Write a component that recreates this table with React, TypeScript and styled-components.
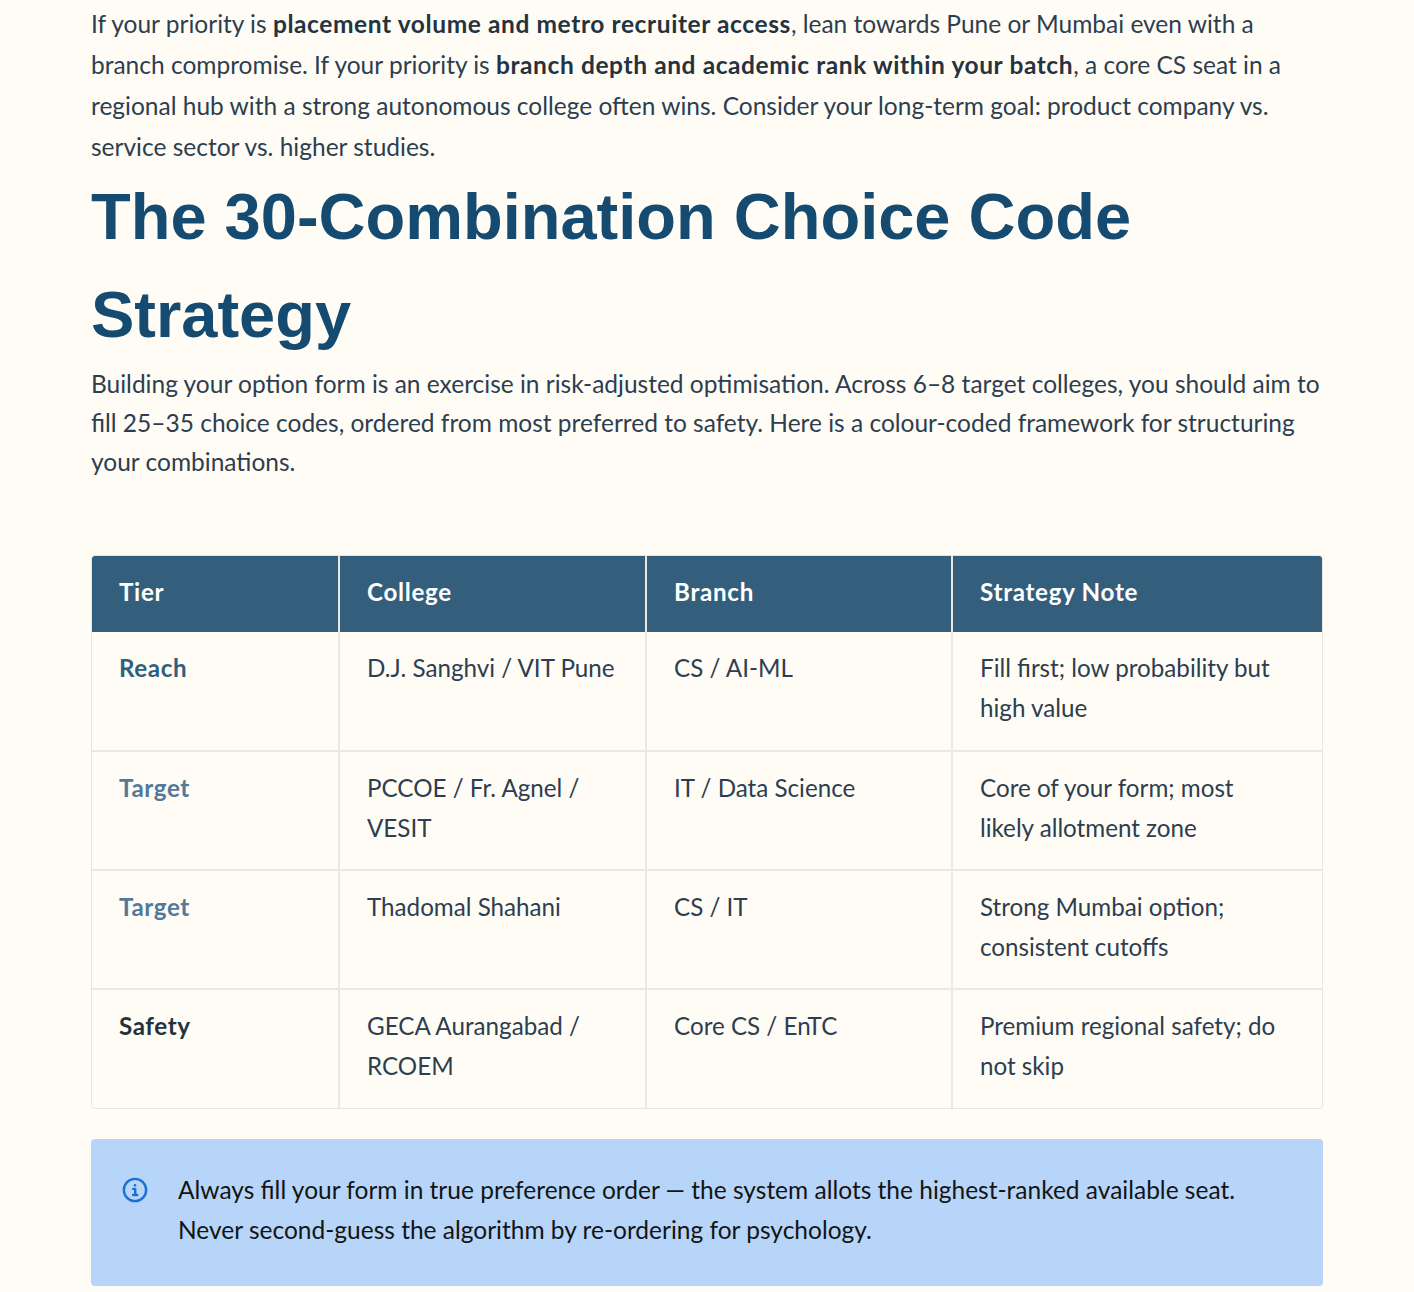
import React from 'react';
import styled, { createGlobalStyle } from 'styled-components';

const GlobalStyle = createGlobalStyle`
  html, body {
    margin: 0;
    padding: 0;
    background: #fffcf5;
  }
  body {
    font-family: Lato, 'Noto Sans', sans-serif;
    color: #2c3e50;
  }
`;

const Article = styled.article`
  width: 1232px;
  margin: 0 auto;
  padding-top: 3px;
  padding-bottom: 7px;
`;

const Lead = styled.p<{ $tall?: boolean }>`
  margin: 0;
  width: 1241px;
  font-size: 24.5px;
  line-height: ${(p) => (p.$tall ? '41px' : '39px')};
  color: #2c3e50;

  strong {
    font-weight: 700;
    letter-spacing: 0.6px;
    color: #24333f;
  }
`;

const Heading = styled.h2`
  margin: 1px 0 0;
  font-family: 'Liberation Sans', Arial, sans-serif;
  font-weight: 700;
  font-size: 65px;
  line-height: 98px;
  color: #154b70;
`;

const TableWrap = styled.div`
  margin-top: 74px;
  border: 1px solid #ebe6dd;
  border-radius: 4px;
  overflow: hidden;
`;

const Table = styled.table`
  width: 100%;
  border-collapse: collapse;
  table-layout: fixed;
  font-size: 24.2px;
`;

const HeadCell = styled.th<{ $w: number }>`
  width: ${(p) => p.$w}px;
  height: 76px;
  padding: 0 27px 6px;
  box-sizing: border-box;
  text-align: left;
  font-weight: 700;
  letter-spacing: 0.7px;
  color: #ffffff;
  background: #335f7c;
  border-left: 2px solid #e9e6df;

  &:first-child {
    border-left: none;
  }
`;

const Row = styled.tr`
  & + & td {
    border-top: 2px solid #ece8e0;
  }
`;

const Cell = styled.td`
  height: 119px;
  padding: 16px 27px 20px;
  box-sizing: border-box;
  vertical-align: top;
  line-height: 40px;
  color: #2c3e50;
  border-left: 2px solid #ece8e0;

  &:first-child {
    border-left: none;
  }
  &:last-child {
    padding-right: 32px;
  }
`;

const tierColors = {
  reach: '#2f5f80',
  target: '#51799a',
  safety: '#25323d',
};

const Tier = styled.strong<{ $kind: keyof typeof tierColors }>`
  font-weight: 700;
  letter-spacing: 0.6px;
  color: ${(p) => tierColors[p.$kind]};
`;

const Callout = styled.div`
  margin-top: 30px;
  display: flex;
  align-items: flex-start;
  gap: 30px;
  padding: 31px 32px 36px 31px;
  background: #b6d5f9;
  border-radius: 4px;
  font-size: 24.5px;
  line-height: 40px;
  color: #141414;
`;

const IconBox = styled.span`
  flex: none;
  display: flex;
  align-items: center;
  height: 40px;
  color: #1b70d6;
`;

const InfoIcon = () => (
  <svg width="26" height="26" viewBox="0 0 24 24" fill="none" stroke="currentColor" strokeWidth="2.2">
    <circle cx="12" cy="12" r="10.3" />
    <path d="M10.4 11H12.2V16.6M10.3 16.6H14" strokeLinecap="round" strokeLinejoin="round" />
    <circle cx="12" cy="7.6" r="1.2" fill="currentColor" stroke="none" />
  </svg>
);

const rows = [
  {
    kind: 'reach' as const,
    tier: 'Reach',
    college: 'D.J. Sanghvi / VIT Pune',
    branch: 'CS / AI-ML',
    note: 'Fill first; low probability but high value',
  },
  {
    kind: 'target' as const,
    tier: 'Target',
    college: 'PCCOE / Fr. Agnel / VESIT',
    branch: 'IT / Data Science',
    note: 'Core of your form; most likely allotment zone',
  },
  {
    kind: 'target' as const,
    tier: 'Target',
    college: 'Thadomal Shahani',
    branch: 'CS / IT',
    note: 'Strong Mumbai option; consistent cutoffs',
  },
  {
    kind: 'safety' as const,
    tier: 'Safety',
    college: 'GECA Aurangabad / RCOEM',
    branch: 'Core CS / EnTC',
    note: 'Premium regional safety; do not skip',
  },
];

export default function App() {
  return (
    <>
      <GlobalStyle />
      <Article>
        <Lead $tall>
          If your priority is <strong>placement volume and metro recruiter access</strong>, lean towards Pune or
          Mumbai even with a branch compromise. If your priority is{' '}
          <strong>branch depth and academic rank within your batch</strong>, a core CS seat in a regional hub with a
          strong autonomous college often wins. Consider your long-term goal: product company vs. service sector vs.
          higher studies.
        </Lead>
        <Heading>The 30-Combination Choice Code Strategy</Heading>
        <Lead>
          Building your option form is an exercise in risk-adjusted optimisation. Across 6–8 target colleges, you
          should aim to fill 25–35 choice codes, ordered from most preferred to safety. Here is a colour-coded
          framework for structuring your combinations.
        </Lead>
        <TableWrap>
          <Table>
            <thead>
              <tr>
                <HeadCell $w={247}>Tier</HeadCell>
                <HeadCell $w={307}>College</HeadCell>
                <HeadCell $w={306}>Branch</HeadCell>
                <HeadCell $w={370}>Strategy Note</HeadCell>
              </tr>
            </thead>
            <tbody>
              {rows.map((r, i) => (
                <Row key={i}>
                  <Cell>
                    <Tier $kind={r.kind}>{r.tier}</Tier>
                  </Cell>
                  <Cell>{r.college}</Cell>
                  <Cell>{r.branch}</Cell>
                  <Cell>{r.note}</Cell>
                </Row>
              ))}
            </tbody>
          </Table>
        </TableWrap>
        <Callout>
          <IconBox>
            <InfoIcon />
          </IconBox>
          <span>
            Always fill your form in true preference order — the system allots the highest-ranked available seat.
            Never second-guess the algorithm by re-ordering for psychology.
          </span>
        </Callout>
      </Article>
    </>
  );
}
